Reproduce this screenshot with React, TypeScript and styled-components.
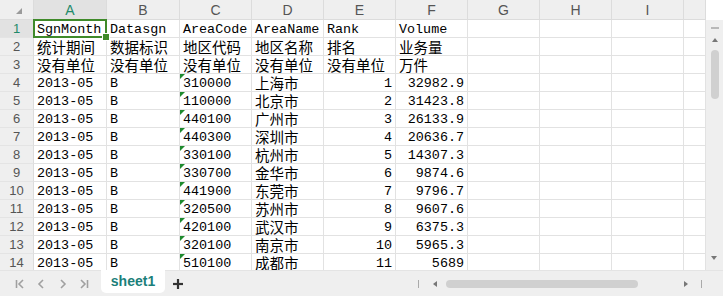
import React from "react";
import styled, { createGlobalStyle, css } from "styled-components";

const Global = createGlobalStyle`
  html, body { margin: 0; padding: 0; background: #ffffff; }
  * { box-sizing: border-box; }
`;

const Frame = styled.div`
  width: 723px;
  height: 296px;
  display: flex;
  flex-direction: column;
  overflow: hidden;
  background: #fff;
`;

const Main = styled.div`
  display: flex;
  height: 270px;
`;

const Grid = styled.div`
  flex: 1;
  display: grid;
  grid-template-columns: 34px 73px 73px repeat(7, 72px) 1fr;
  grid-template-rows: 20px repeat(14, 18px);
  overflow: hidden;
  height: 270px;
`;

const Corner = styled.div`
  background: #efefef;
  border-right: 1px solid #dcdcdc;
  border-bottom: 1px solid #dcdcdc;
  position: relative;
  &::after {
    content: "";
    position: absolute;
    right: 11px;
    bottom: 5px;
    width: 0;
    height: 0;
    border-left: 6px solid transparent;
    border-bottom: 6px solid #9a9a9a;
  }
`;

const ColHead = styled.div<{ $active?: boolean }>`
  background: ${(p) => (p.$active ? "#e2e2e2" : "#efefef")};
  color: ${(p) => (p.$active ? "#1f8a6a" : "#555")};
  border-right: 1px solid #dcdcdc;
  border-bottom: 1px solid #dcdcdc;
  display: flex;
  align-items: center;
  justify-content: center;
  font-family: "Liberation Sans", Arial, sans-serif;
  font-size: 14px;
`;

const RowHead = styled.div<{ $active?: boolean }>`
  background: ${(p) => (p.$active ? "#e2e2e2" : "#efefef")};
  color: ${(p) => (p.$active ? "#1f8a6a" : "#555")};
  border-right: 1px solid #dcdcdc;
  border-bottom: 1px solid #e4e4e4;
  display: flex;
  align-items: center;
  justify-content: center;
  font-family: "Liberation Sans", Arial, sans-serif;
  font-size: 13px;
`;

const Cell = styled.div<{ $num?: boolean; $flag?: boolean }>`
  position: relative;
  border-right: 1px solid #e2e2e2;
  border-bottom: 1px solid #e2e2e2;
  color: #000;
  font-family: "Liberation Mono", "Noto Sans CJK SC", monospace;
  font-size: 13.4px;
  line-height: 17px;
  white-space: nowrap;
  display: flex;
  align-items: center;
  justify-content: ${(p) => (p.$num ? "flex-end" : "flex-start")};
  padding: 1px ${(p) => (p.$num ? "3px" : "0")} 0 ${(p) => (p.$num ? "0" : "3px")};
  ${(p) =>
    p.$flag &&
    css`
      &::before {
        content: "";
        position: absolute;
        left: 0;
        top: 0;
        width: 0;
        height: 0;
        border-top: 5px solid #1e8a2e;
        border-right: 5px solid transparent;
      }
    `}
`;

const CjkText = styled.span`
  font-family: "Noto Sans CJK SC", sans-serif;
  font-size: 14.5px;
  line-height: 15px;
  height: 15px;
  display: inline-block;
  margin-top: -1px;
`;

const Selection = styled.div`
  position: absolute;
  left: -1px;
  top: -1px;
  right: -1px;
  bottom: -1px;
  border: 2px solid #3f8a2a;
  pointer-events: none;
  z-index: 2;
  &::after {
    content: "";
    position: absolute;
    right: -5px;
    bottom: -5px;
    width: 6px;
    height: 6px;
    background: #3f8a2a;
    border: 1px solid #fff;
  }
`;

const VScroll = styled.div`
  width: 17px;
  margin-top: 20px;
  height: 250px;
  background: #efefef;
  display: flex;
  flex-direction: column;
  align-items: center;
  padding-top: 7px;
  position: relative;
`;

const Dash = styled.div`
  width: 8px;
  height: 2px;
  background: #b8b8b8;
`;

const TriUp = styled.div`
  margin-top: 9px;
  width: 0;
  height: 0;
  border-left: 3.5px solid transparent;
  border-right: 3.5px solid transparent;
  border-bottom: 4px solid #777;
`;

const VThumb = styled.div`
  margin-top: 8px;
  width: 8px;
  height: 49px;
  border-radius: 4px;
  background: #d0d0d0;
`;

const TriDown = styled.div`
  position: absolute;
  bottom: 10px;
  left: 5px;
  width: 0;
  height: 0;
  border-left: 3.5px solid transparent;
  border-right: 3.5px solid transparent;
  border-top: 4px solid #777;
`;

const TabBar = styled.div`
  height: 26px;
  background: #efefef;
  border-top: 1px solid #e4e4e4;
  display: flex;
  align-items: flex-start;
`;

const Nav = styled.div`
  display: flex;
  align-items: center;
  height: 25px;
  padding-left: 9px;
  width: 101px;
`;

const NavBtn = styled.div`
  width: 21.5px;
  height: 25px;
  display: flex;
  align-items: center;
  justify-content: center;
`;

const Tab = styled.div`
  width: 64px;
  height: 23px;
  margin-top: -1px;
  background: #fff;
  border-radius: 0 0 5px 5px;
  display: flex;
  align-items: center;
  justify-content: center;
  font-family: "Liberation Sans", Arial, sans-serif;
  font-weight: 700;
  font-size: 14px;
  color: #1b7f7a;
  padding-bottom: 1px;
`;

const AddBtn = styled.div`
  width: 24px;
  height: 25px;
  display: flex;
  align-items: center;
  justify-content: center;
  margin-left: 1px;
`;

const Spacer = styled.div`
  flex: 1;
`;

const HScroll = styled.div`
  width: 305px;
  height: 25px;
  display: flex;
  align-items: center;
`;

const Bar = styled.div`
  width: 1px;
  height: 8px;
  background: #aaa;
`;

const TriL = styled.div`
  margin-left: 14px;
  width: 0;
  height: 0;
  border-top: 3px solid transparent;
  border-bottom: 3px solid transparent;
  border-right: 4px solid #777;
`;

const HThumb = styled.div`
  margin-left: 9px;
  width: 192px;
  height: 8px;
  border-radius: 4px;
  background: #d0d0d0;
`;

const TriR = styled.div`
  margin-left: 46px;
  width: 0;
  height: 0;
  border-top: 3px solid transparent;
  border-bottom: 3px solid transparent;
  border-left: 4px solid #777;
`;

const BarR = styled(Bar)`
  margin-left: 13px;
`;

type Row = [string, string, string, string, string, string];

const rows: Row[] = [
  ["SgnMonth", "Datasgn", "AreaCode", "AreaName", "Rank", "Volume"],
  ["统计期间", "数据标识", "地区代码", "地区名称", "排名", "业务量"],
  ["没有单位", "没有单位", "没有单位", "没有单位", "没有单位", "万件"],
  ["2013-05", "B", "310000", "上海市", "1", "32982.9"],
  ["2013-05", "B", "110000", "北京市", "2", "31423.8"],
  ["2013-05", "B", "440100", "广州市", "3", "26133.9"],
  ["2013-05", "B", "440300", "深圳市", "4", "20636.7"],
  ["2013-05", "B", "330100", "杭州市", "5", "14307.3"],
  ["2013-05", "B", "330700", "金华市", "6", "9874.6"],
  ["2013-05", "B", "441900", "东莞市", "7", "9796.7"],
  ["2013-05", "B", "320500", "苏州市", "8", "9607.6"],
  ["2013-05", "B", "420100", "武汉市", "9", "6375.3"],
  ["2013-05", "B", "320100", "南京市", "10", "5965.3"],
  ["2013-05", "B", "510100", "成都市", "11", "5689"],
];

const cols = ["A", "B", "C", "D", "E", "F", "G", "H", "I", ""];
const isCjk = (s: string) => /[\u4e00-\u9fff]/.test(s);

const ChevL = ({ double }: { double?: boolean }) => (
  <svg width="12" height="12" viewBox="0 0 12 12" fill="none" stroke="#a0a0a0" strokeWidth="1.6">
    {double && <line x1="2.5" y1="2" x2="2.5" y2="10" />}
    <polyline points={double ? "9,2 5,6 9,10" : "8,2 4,6 8,10"} />
  </svg>
);
const ChevR = ({ double }: { double?: boolean }) => (
  <svg width="12" height="12" viewBox="0 0 12 12" fill="none" stroke="#a0a0a0" strokeWidth="1.6">
    {double && <line x1="9.5" y1="2" x2="9.5" y2="10" />}
    <polyline points={double ? "3,2 7,6 3,10" : "4,2 8,6 4,10"} />
  </svg>
);

export default function App() {
  return (
    <>
      <Global />
      <Frame>
        <Main>
          <Grid>
            <Corner />
            {cols.map((c, i) => (
              <ColHead key={i} $active={c === "A"}>
                {c}
              </ColHead>
            ))}
            {rows.map((r, ri) => (
              <React.Fragment key={ri}>
                <RowHead $active={ri === 0}>{ri + 1}</RowHead>
                {cols.map((_, ci) => {
                  const v = ci < 6 ? r[ci] : "";
                  const num = ri >= 3 && (ci === 4 || ci === 5);
                  const flag = ri >= 3 && ci === 2;
                  return (
                    <Cell key={ci} $num={num} $flag={flag}>
                      {isCjk(v) ? <CjkText>{v}</CjkText> : v}
                      {ri === 0 && ci === 0 && <Selection />}
                    </Cell>
                  );
                })}
              </React.Fragment>
            ))}
          </Grid>
          <VScroll>
            <Dash />
            <TriUp />
            <VThumb />
            <TriDown />
          </VScroll>
        </Main>
        <TabBar>
          <Nav>
            <NavBtn><ChevL double /></NavBtn>
            <NavBtn><ChevL /></NavBtn>
            <NavBtn><ChevR /></NavBtn>
            <NavBtn><ChevR double /></NavBtn>
          </Nav>
          <Tab>sheet1</Tab>
          <AddBtn>
            <svg width="12" height="12" viewBox="0 0 12 12" stroke="#333" strokeWidth="2.2">
              <line x1="6" y1="1" x2="6" y2="11" />
              <line x1="1" y1="6" x2="11" y2="6" />
            </svg>
          </AddBtn>
          <Spacer />
          <HScroll>
            <Bar />
            <TriL />
            <HThumb />
            <TriR />
            <BarR />
          </HScroll>
        </TabBar>
      </Frame>
    </>
  );
}
